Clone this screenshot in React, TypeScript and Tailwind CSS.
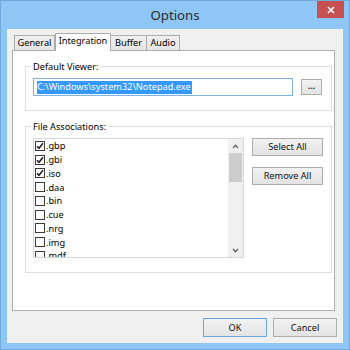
const items: [string, boolean][] = [
  ['.gbp', true],
  ['.gbi', true],
  ['.iso', true],
  ['.daa', false],
  ['.bin', false],
  ['.cue', false],
  ['.nrg', false],
  ['.img', false],
  ['.mdf', false],
];

function Check({ checked }: { checked: boolean }) {
  return (
    <div className="w-[10px] h-[10px] border border-[#3c3c3c] bg-white flex items-center justify-center shrink-0">
      {checked && (
        <svg width="8" height="8" viewBox="0 0 8 8">
          <path d="M1 4.2 L3 6.3 L7 1.3" fill="none" stroke="#1a1a1a" strokeWidth="1.5" />
        </svg>
      )}
    </div>
  );
}

function Btn({ label, w, h, blue }: { label: string; w: string; h: string; blue?: boolean }) {
  return (
    <div
      className={`${w} ${h} border ${blue ? 'border-[#6aa6e0]' : 'border-[#acacac]'} bg-gradient-to-b from-[#f2f2f2] to-[#e3e3e3] flex items-center justify-center text-[#111]`}
    >
      {label}
    </div>
  );
}

export default function App() {
  return (
    <div className="w-[350px] h-[350px] bg-[#8ec6f6] border border-[#72a9df] flex flex-col font-['Noto_Sans',sans-serif] text-[9.2px] leading-none text-black overflow-hidden">
      {/* Title bar */}
      <div className="h-[28px] shrink-0 grid grid-cols-[1fr_auto_1fr]">
        <div />
        <div className="flex items-center text-[13.2px] text-[#2b2b2b] pt-[1px]">Options</div>
        <div className="flex justify-end items-start pr-[5px]">
          <div className="w-[27px] h-[17px] bg-[#c75050] flex items-center justify-center">
            <svg width="8" height="8" viewBox="0 0 8 8">
              <path d="M1 1 L7 7 M7 1 L1 7" stroke="#ffffff" strokeWidth="1.6" />
            </svg>
          </div>
        </div>
      </div>

      {/* Client area */}
      <div className="mx-[6px] h-[314px] shrink-0 bg-[#f0f0f0] pt-[4px] pl-[5px] flex flex-col">
        {/* Tabs */}
        <div className="flex items-end h-[17px] pl-[2px]">
          <div className="w-[41px] h-[15px] border border-b-0 border-[#acacac] bg-gradient-to-b from-[#f0f0f0] to-[#e5e5e5] flex items-center justify-center">
            General
          </div>
          <div className="relative z-10 w-[56px] h-[18px] -mb-[1px] border border-b-0 border-[#acacac] bg-white flex items-center justify-center pb-[3px]">
            Integration
          </div>
          <div className="w-[36px] h-[15px] border border-b-0 border-l-0 border-[#acacac] bg-gradient-to-b from-[#f0f0f0] to-[#e5e5e5] flex items-center justify-center">
            Buffer
          </div>
          <div className="w-[33px] h-[15px] border border-b-0 border-l-0 border-[#acacac] bg-gradient-to-b from-[#f0f0f0] to-[#e5e5e5] flex items-center justify-center">
            Audio
          </div>
        </div>

        {/* Panel */}
        <div className="w-[323px] h-[261px] border border-[#acacac] bg-white pl-[12px] flex flex-col">
          {/* Default Viewer group */}
          <div className="relative mt-[15px] w-[307px] h-[45px] border border-[#dcdcdc] pt-[11px] pl-[7px] flex items-start">
            <div className="absolute -top-[7px] left-[5px] bg-white px-[2px] leading-[13px]">Default Viewer:</div>
            <div className="w-[260px] h-[18px] border border-[#7eb4ea] bg-white flex items-center pl-[3px]">
              <span className="bg-[#3399ff] text-white h-[13px] flex items-center pr-[1px]">C:\Windows\system32\Notepad.exe</span>
            </div>
            <div className="ml-[8px] mt-[1px] w-[21px] h-[16px] border border-[#acacac] bg-gradient-to-b from-[#f2f2f2] to-[#e3e3e3] flex items-center justify-center text-[#333] pb-[3px] font-bold">
              ...
            </div>
          </div>

          {/* File Associations group */}
          <div className="relative mt-[15px] w-[307px] h-[147px] border border-[#dcdcdc] pt-[11px] pl-[7px] flex items-start">
            <div className="absolute -top-[7px] left-[5px] bg-white px-[2px] leading-[13px]">File Associations:</div>
            <div className="w-[211px] h-[120px] border border-[#d6d6d6] bg-white flex overflow-hidden">
              <div className="flex-1 flex flex-col pl-[1px] overflow-hidden">
                {items.map(([name, checked]) => (
                  <div key={name} className="h-[13.75px] shrink-0 flex items-center gap-[1px]">
                    <Check checked={checked} />
                    <span className="leading-none">{name}</span>
                  </div>
                ))}
              </div>
              <div className="w-[15px] h-full bg-[#f0f0f0] flex flex-col">
                <div className="h-[14px] flex items-center justify-center">
                  <svg width="7" height="5" viewBox="0 0 7 5">
                    <path d="M1 4 L3.5 1.3 L6 4" fill="none" stroke="#606060" strokeWidth="1.3" />
                  </svg>
                </div>
                <div className="h-[29px] mx-[1px] bg-[#cdcdcd]" />
                <div className="flex-1" />
                <div className="h-[14px] flex items-center justify-center">
                  <svg width="7" height="5" viewBox="0 0 7 5">
                    <path d="M1 1 L3.5 3.7 L6 1" fill="none" stroke="#606060" strokeWidth="1.3" />
                  </svg>
                </div>
              </div>
            </div>
            <div className="ml-[8px] flex flex-col gap-[11px]">
              <Btn label="Select All" w="w-[71px]" h="h-[18px]" />
              <Btn label="Remove All" w="w-[71px]" h="h-[18px]" />
            </div>
          </div>
        </div>

        {/* Bottom buttons */}
        <div className="mt-[7px] flex justify-end gap-[6px] pr-[6px]">
          <Btn label="OK" w="w-[64px]" h="h-[19px]" blue />
          <Btn label="Cancel" w="w-[64px]" h="h-[19px]" />
        </div>
      </div>
    </div>
  );
}
